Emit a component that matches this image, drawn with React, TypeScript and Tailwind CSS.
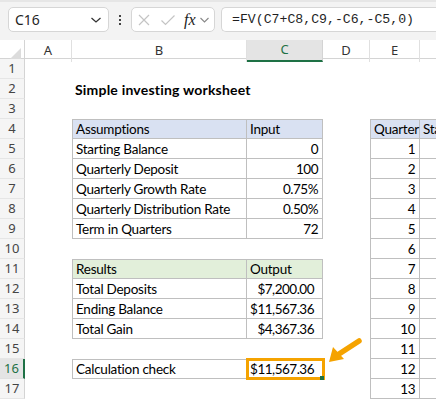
import React from "react";

type CellSpec = {
  text?: string;
  right?: boolean;
  bold?: boolean;
  fill?: string;
  boxed?: boolean;
  top?: boolean;
  left?: boolean;
  pad?: string;
};

const GRID = "grid grid-cols-[25px_47px_175px_76px_47px_50px_90px]";
const BORDER = "border-[#bfbfbf]";

const blue = "bg-[#d9e1f2]";
const green = "bg-[#e2efda]";

function buildRows(): Record<string, CellSpec>[] {
  const rows: Record<string, CellSpec>[] = [];
  for (let i = 1; i <= 17; i++) rows.push({});
  rows[1].B = { text: "Simple investing worksheet", bold: true };
  rows[3].B = { text: "Assumptions", fill: blue, boxed: true, top: true, left: true };
  rows[3].C = { text: "Input", fill: blue, boxed: true, top: true };
  const assumptions: [string, string][] = [
    ["Starting Balance", "0"],
    ["Quarterly Deposit", "100"],
    ["Quarterly Growth Rate", "0.75%"],
    ["Quarterly Distribution Rate", "0.50%"],
    ["Term in Quarters", "72"],
  ];
  assumptions.forEach(([label, value], i) => {
    rows[4 + i].B = { text: label, boxed: true, left: true };
    rows[4 + i].C = { text: value, right: true, boxed: true };
  });
  rows[10].B = { text: "Results", fill: green, boxed: true, top: true, left: true };
  rows[10].C = { text: "Output", fill: green, boxed: true, top: true };
  const results: [string, string][] = [
    ["Total Deposits", "$7,200.00"],
    ["Ending Balance", "$11,567.36"],
    ["Total Gain", "$4,367.36"],
  ];
  results.forEach(([label, value], i) => {
    rows[11 + i].B = { text: label, boxed: true, left: true };
    rows[11 + i].C = { text: value, right: true, boxed: true, pad: "pr-[8px]" };
  });
  rows[15].B = { text: "Calculation check", boxed: true, top: true, left: true };
  rows[15].C = { text: "$11,567.36", right: true, boxed: true, top: true, pad: "pr-[8px]" };

  // quarter schedule on the right
  rows[3].E = { text: "Quarter", fill: blue, boxed: true, top: true, left: true };
  rows[3].F = { text: "Starting", fill: blue, boxed: true, top: true };
  for (let q = 1; q <= 13; q++) {
    rows[3 + q].E = { text: String(q), right: true, boxed: true, left: true };
    rows[3 + q].F = { boxed: true };
  }
  return rows;
}

function Cell({ spec }: { spec?: CellSpec }) {
  if (!spec) return <div className="h-[20px]" />;
  return (
    <div
      className={[
        "h-[20px] flex items-center whitespace-nowrap overflow-visible leading-none text-black",
        spec.bold
          ? "font-bold text-[14px] tracking-[0.2px]"
          : spec.right
            ? "text-[13.5px] tracking-[-0.5px]"
            : "text-[13.5px] tracking-[-0.25px]",
        spec.fill ?? "",
        spec.boxed ? `border-r border-b ${BORDER}` : "",
        spec.top ? `border-t ${BORDER}` : "",
        spec.left ? `border-l ${BORDER}` : "",
        spec.right ? `justify-end ${spec.pad ?? "pr-[4px]"}` : "pl-[3px]",
      ].join(" ")}
    >
      <span className="pt-[2px]">{spec.text}</span>
    </div>
  );
}

function Toolbar() {
  return (
    <div className="h-[40px] bg-[#f3f3f3] border-t-2 border-[#e6e6e6] flex items-start pt-[5px] font-['Noto_Sans',sans-serif]">
      <div className="ml-[8px] w-[101px] h-[25px] bg-white border border-[#d6d6d6] rounded-[5px] flex items-center justify-between pl-[6px] pr-[6px]">
        <span className="text-[14px] text-[#1f1f1f]">C16</span>
        <svg width="12" height="8" viewBox="0 0 12 8" className="mt-[1px]">
          <path d="M1.5 2 L6 6 L10.5 2" fill="none" stroke="#333" strokeWidth="1.3" />
        </svg>
      </div>
      <div className="w-[22px] h-[25px] flex flex-col items-center justify-center gap-[2px]">
        <div className="w-[2px] h-[2px] bg-[#444]" />
        <div className="w-[2px] h-[2px] bg-[#444]" />
        <div className="w-[2px] h-[2px] bg-[#444]" />
      </div>
      <div className="w-[84px] h-[25px] bg-white border border-[#d6d6d6] rounded-[5px] flex items-center pl-[5px]">
        <svg width="14" height="14" viewBox="0 0 14 14">
          <path d="M2 2 L12 12 M12 2 L2 12" stroke="#c4c4c4" strokeWidth="1.2" />
        </svg>
        <svg width="16" height="14" viewBox="0 0 16 14" className="ml-[9px]">
          <path d="M1.5 7.5 L5.5 11.5 L14.5 2.5" fill="none" stroke="#c4c4c4" strokeWidth="1.2" />
        </svg>
        <span className="ml-[8px] text-[16px] italic text-[#222] font-['Liberation_Serif',serif] leading-none">
          fx
        </span>
        <svg width="11" height="8" viewBox="0 0 11 8" className="ml-[3px]">
          <path d="M1.5 2 L5.5 6 L9.5 2" fill="none" stroke="#888" strokeWidth="1.1" />
        </svg>
      </div>
      <div className="ml-[6px] flex-1 h-[25px] bg-white border border-[#d6d6d6] rounded-l-[5px] border-r-0 flex items-center pl-[10px]">
        <span className="text-[13.2px] text-[#1f1f1f] font-['Liberation_Mono',monospace]">
          =FV(C7+C8,C9,-C6,-C5,0)
        </span>
      </div>
    </div>
  );
}

function ColumnHeaders() {
  const cols = ["A", "B", "C", "D", "E", ""];
  return (
    <div className={`${GRID} h-[19px] bg-white border-b border-[#d4d4d4]`}>
      <div className="relative border-r border-[#d4d4d4]">
        <svg width="12" height="12" viewBox="0 0 12 12" className="absolute right-[3px] bottom-[2px]">
          <path d="M12 0 L12 12 L0 12 Z" fill="#dcdcdc" />
        </svg>
      </div>
      {cols.map((c, i) => (
        <div
          key={i}
          className={
            c === "C"
              ? "flex items-center justify-center text-[13px] text-[#1e7145] bg-[#e4e4e4] border-b-2 border-[#1e7145] border-r border-r-[#d4d4d4]"
              : "flex items-center justify-center text-[13px] text-[#333] border-r border-[#e0e0e0]"
          }
        >
          {c}
        </div>
      ))}
    </div>
  );
}

export default function App() {
  const rows = buildRows();
  return (
    <div className="w-[436px] h-[400px] overflow-hidden bg-white relative">
      <Toolbar />
      <div className="font-['Noto_Sans',sans-serif]">
        <ColumnHeaders />
      </div>
      <div className="relative">
        {rows.map((r, i) => {
          const n = i + 1;
          const active = n === 16;
          return (
            <div key={n} className={`${GRID} h-[20px]`}>
              <div
                className={
                  active
                    ? "h-[20px] flex items-center justify-center text-[13px] text-[#1e7145] bg-[#e4e4e4] border-r-2 border-[#1e7145] border-b border-b-[#e0e0e0] font-['Noto_Sans',sans-serif]"
                    : "h-[20px] flex items-center justify-center text-[13px] text-[#444] bg-[#f5f5f5] border-r border-[#d4d4d4] border-b border-b-[#e6e6e6] font-['Noto_Sans',sans-serif]"
                }
              >
                {n}
              </div>
              <div className="h-[20px]" />
              <div className="font-['Lato',sans-serif]">
                <Cell spec={r.B} />
              </div>
              <div className="font-['Lato',sans-serif]">
                <Cell spec={r.C} />
              </div>
              <div className="h-[20px]" />
              <div className="font-['Lato',sans-serif]">
                <Cell spec={r.E} />
              </div>
              <div className="font-['Lato',sans-serif] overflow-hidden">
                <Cell spec={r.F} />
              </div>
            </div>
          );
        })}

        {/* selection outline on C16 */}
        <div className="absolute left-[246px] top-[299px] w-[79px] h-[22px] border-[3px] border-[#f5a300]" />
        <div className="absolute left-[320px] top-[317px] w-[4px] h-[4px] bg-[#1e7145]" />

        {/* callout arrow */}
        <svg
          className="absolute left-[325px] top-[277px]"
          width="40"
          height="30"
          viewBox="0 0 40 30"
        >
          <path d="M34 5 L14 18" stroke="#f5a300" strokeWidth="5.5" strokeLinecap="round" />
          <path d="M4 26 L8 11 L19 23 Z" fill="#f5a300" />
        </svg>
      </div>
    </div>
  );
}
